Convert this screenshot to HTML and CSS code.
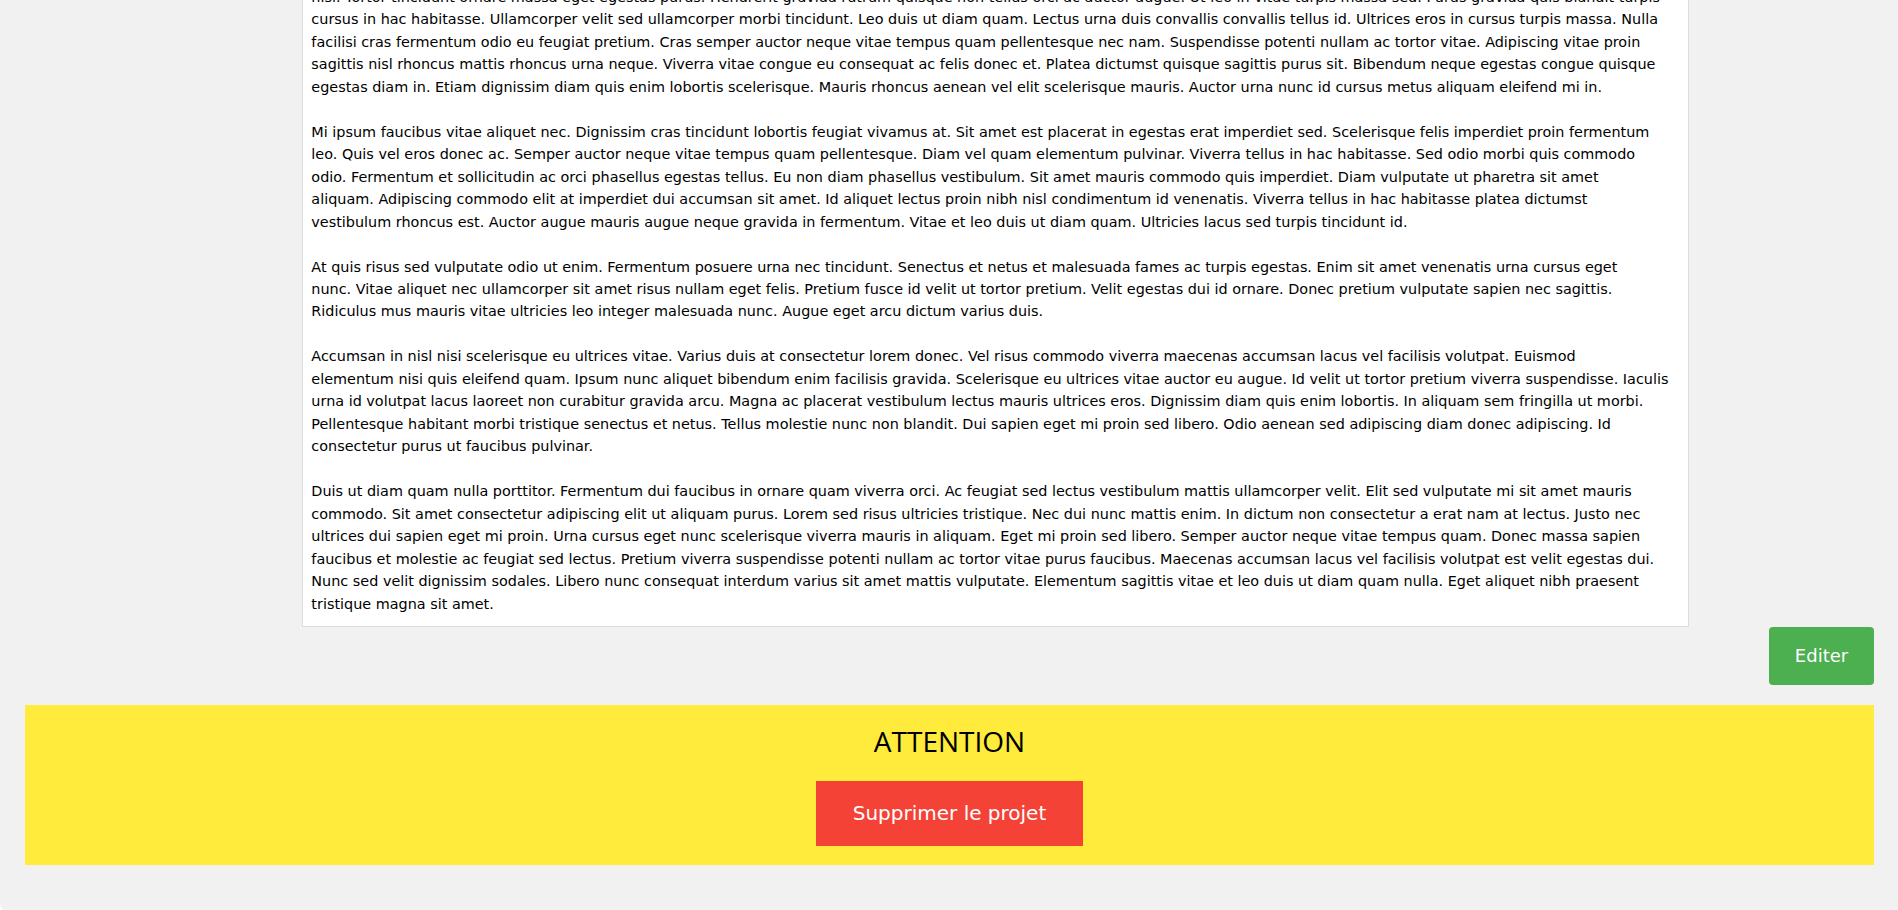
FILE: index.html
```html
<!DOCTYPE html>
<html lang="fr">
<head>
<meta charset="utf-8">
<title>Projet</title>
<link rel="stylesheet" href="styles.css">
</head>
<body>
<div class="page">
  <main class="content">
    <div class="description">
      <p>Lorem ipsum dolor sit amet, consectetur adipiscing elit, sed do eiusmod tempor incididunt ut labore et dolore magna aliqua. Aliquam nulla facilisi cras fermentum odio eu feugiat pretium nibh ipsum consequat<br>
nisl. Tortor tincidunt ornare massa eget egestas purus. Hendrerit gravida rutrum quisque non tellus orci ac auctor augue. Ut leo in vitae turpis massa sed. Purus gravida quis blandit turpis<br>
cursus in hac habitasse. Ullamcorper velit sed ullamcorper morbi tincidunt. Leo duis ut diam quam. Lectus urna duis convallis convallis tellus id. Ultrices eros in cursus turpis massa. Nulla<br>
facilisi cras fermentum odio eu feugiat pretium. Cras semper auctor neque vitae tempus quam pellentesque nec nam. Suspendisse potenti nullam ac tortor vitae. Adipiscing vitae proin<br>
sagittis nisl rhoncus mattis rhoncus urna neque. Viverra vitae congue eu consequat ac felis donec et. Platea dictumst quisque sagittis purus sit. Bibendum neque egestas congue quisque<br>
egestas diam in. Etiam dignissim diam quis enim lobortis scelerisque. Mauris rhoncus aenean vel elit scelerisque mauris. Auctor urna nunc id cursus metus aliquam eleifend mi in.</p>
      <p>Mi ipsum faucibus vitae aliquet nec. Dignissim cras tincidunt lobortis feugiat vivamus at. Sit amet est placerat in egestas erat imperdiet sed. Scelerisque felis imperdiet proin fermentum<br>
leo. Quis vel eros donec ac. Semper auctor neque vitae tempus quam pellentesque. Diam vel quam elementum pulvinar. Viverra tellus in hac habitasse. Sed odio morbi quis commodo<br>
odio. Fermentum et sollicitudin ac orci phasellus egestas tellus. Eu non diam phasellus vestibulum. Sit amet mauris commodo quis imperdiet. Diam vulputate ut pharetra sit amet<br>
aliquam. Adipiscing commodo elit at imperdiet dui accumsan sit amet. Id aliquet lectus proin nibh nisl condimentum id venenatis. Viverra tellus in hac habitasse platea dictumst<br>
vestibulum rhoncus est. Auctor augue mauris augue neque gravida in fermentum. Vitae et leo duis ut diam quam. Ultricies lacus sed turpis tincidunt id.</p>
      <p>At quis risus sed vulputate odio ut enim. Fermentum posuere urna nec tincidunt. Senectus et netus et malesuada fames ac turpis egestas. Enim sit amet venenatis urna cursus eget<br>
nunc. Vitae aliquet nec ullamcorper sit amet risus nullam eget felis. Pretium fusce id velit ut tortor pretium. Velit egestas dui id ornare. Donec pretium vulputate sapien nec sagittis.<br>
Ridiculus mus mauris vitae ultricies leo integer malesuada nunc. Augue eget arcu dictum varius duis.</p>
      <p>Accumsan in nisl nisi scelerisque eu ultrices vitae. Varius duis at consectetur lorem donec. Vel risus commodo viverra maecenas accumsan lacus vel facilisis volutpat. Euismod<br>
elementum nisi quis eleifend quam. Ipsum nunc aliquet bibendum enim facilisis gravida. Scelerisque eu ultrices vitae auctor eu augue. Id velit ut tortor pretium viverra suspendisse. Iaculis<br>
urna id volutpat lacus laoreet non curabitur gravida arcu. Magna ac placerat vestibulum lectus mauris ultrices eros. Dignissim diam quis enim lobortis. In aliquam sem fringilla ut morbi.<br>
Pellentesque habitant morbi tristique senectus et netus. Tellus molestie nunc non blandit. Dui sapien eget mi proin sed libero. Odio aenean sed adipiscing diam donec adipiscing. Id<br>
consectetur purus ut faucibus pulvinar.</p>
      <p>Duis ut diam quam nulla porttitor. Fermentum dui faucibus in ornare quam viverra orci. Ac feugiat sed lectus vestibulum mattis ullamcorper velit. Elit sed vulputate mi sit amet mauris<br>
commodo. Sit amet consectetur adipiscing elit ut aliquam purus. Lorem sed risus ultricies tristique. Nec dui nunc mattis enim. In dictum non consectetur a erat nam at lectus. Justo nec<br>
ultrices dui sapien eget mi proin. Urna cursus eget nunc scelerisque viverra mauris in aliquam. Eget mi proin sed libero. Semper auctor neque vitae tempus quam. Donec massa sapien<br>
faucibus et molestie ac feugiat sed lectus. Pretium viverra suspendisse potenti nullam ac tortor vitae purus faucibus. Maecenas accumsan lacus vel facilisis volutpat est velit egestas dui.<br>
Nunc sed velit dignissim sodales. Libero nunc consequat interdum varius sit amet mattis vulputate. Elementum sagittis vitae et leo duis ut diam quam nulla. Eget aliquet nibh praesent<br>
tristique magna sit amet.</p>
    </div>
    <div class="actions">
      <button class="btn btn-edit" type="button">Editer</button>
    </div>
    <section class="danger">
      <h2 class="danger-title">ATTENTION</h2>
      <button class="btn btn-delete" type="button">Supprimer le projet</button>
    </section>
  </main>
</div>
</body>
</html>
```
FILE: styles.css
```css
html, body {
  margin: 0;
  height: 100%;
  background: #ffffff;
}

body {
  font-family: "DejaVu Sans", Verdana, sans-serif;
  font-size: 14.4px;
  line-height: 22.47px;
  color: #000;
  overflow: hidden;
}

.page {
  height: 100%;
  background: #f1f1f1;
  border-bottom-left-radius: 6px;
  display: flex;
  flex-direction: column;
  justify-content: flex-end;
  overflow: hidden;
}

.content {
  padding: 0 24px 45px 25px;
  display: flex;
  flex-direction: column;
}

.description {
  margin-left: 15%;
  width: 75%;
  box-sizing: border-box;
  background: #ffffff;
  border: 1px solid #dddddd;
  padding: 0 8px 11px 8px;
  white-space: nowrap;
  overflow: hidden;
}

.description p {
  margin: 0 0 22.47px 0;
}

.description p:last-child {
  margin-bottom: 0;
}

.actions {
  display: flex;
  justify-content: flex-end;
  margin-bottom: 20px;
}

.btn {
  border: none;
  color: #ffffff;
  font-family: "DejaVu Sans", Verdana, sans-serif;
  cursor: pointer;
}

.btn-edit {
  background: #4caf50;
  border-radius: 4px;
  font-size: 18px;
  line-height: 26px;
  padding: 16px 25px;
  width: 105px;
}

.danger {
  background: #ffeb3b;
  display: flex;
  flex-direction: column;
  align-items: center;
  padding-bottom: 19px;
}

.danger-title {
  font-family: "Open Sans", "Noto Sans", sans-serif;
  font-weight: 400;
  font-size: 28px;
  line-height: 42px;
  margin: 15px 0 19px 0;
}

.btn-delete {
  background: #f44336;
  font-size: 20px;
  line-height: 31px;
  padding: 17px 35px;
  width: 267px;
}
```
